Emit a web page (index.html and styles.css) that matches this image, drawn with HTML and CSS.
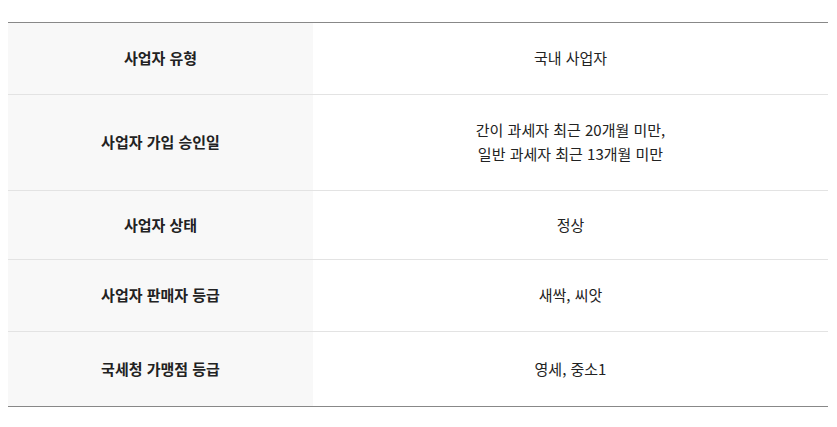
FILE: index.html
```html
<!DOCTYPE html>
<html lang="ko">
<head>
<meta charset="utf-8">
<link rel="stylesheet" href="styles.css">
</head>
<body>
<table class="info-table">
  <tbody>
    <tr>
      <th>사업자 유형</th>
      <td>국내 사업자</td>
    </tr>
    <tr>
      <th>사업자 가입 승인일</th>
      <td>간이 과세자 최근 20개월 미만,<br>일반 과세자 최근 13개월 미만</td>
    </tr>
    <tr class="row-short">
      <th>사업자 상태</th>
      <td>정상</td>
    </tr>
    <tr>
      <th>사업자 판매자 등급</th>
      <td>새싹, 씨앗</td>
    </tr>
    <tr class="row-tall">
      <th>국세청 가맹점 등급</th>
      <td>영세, 중소1</td>
    </tr>
  </tbody>
</table>
</body>
</html>
```

FILE: styles.css
```css
html, body {
  margin: 0;
  padding: 0;
  background: #fff;
}
body {
  padding: 22px 9px 0 8px;
  font-family: "Noto Sans CJK KR", "Noto Sans", sans-serif;
  color: #222;
}
.info-table {
  width: 820px;
  border-collapse: collapse;
  border-top: 1px solid #888;
  border-bottom: 1px solid #888;
  font-size: 15px;
  line-height: 24px;
}
.info-table th,
.info-table td {
  padding: 23px 0 24px;
  text-align: center;
  vertical-align: middle;
  border-bottom: 1px solid #e3e3e3;
}
.info-table tr:last-child th,
.info-table tr:last-child td {
  border-bottom: none;
}
.info-table th {
  width: 305px;
  background: #f8f8f8;
  font-weight: 700;
}
.info-table td {
  font-weight: 400;
}
.info-table .row-short th,
.info-table .row-short td {
  padding: 22px 0;
}
.info-table .row-tall th,
.info-table .row-tall td {
  padding: 25px 0;
}
```
